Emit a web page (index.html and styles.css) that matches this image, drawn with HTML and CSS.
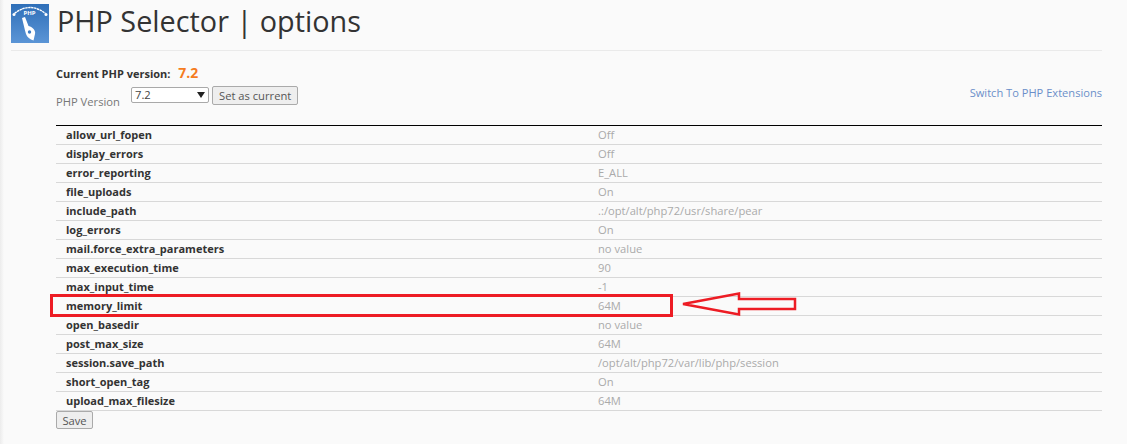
FILE: index.html
```html
<!DOCTYPE html>
<html lang="en">
<head>
<meta charset="utf-8">
<title>PHP Selector | options</title>
<link rel="stylesheet" href="styles.css">
</head>
<body>
<div class="page">
  <header class="head">
    <svg class="logo" width="38" height="39" viewBox="0 0 38 39">
      <defs><linearGradient id="g" x1="0" y1="0" x2="0" y2="1"><stop offset="0" stop-color="#2f6fb8"/><stop offset="1" stop-color="#5b95d6"/></linearGradient></defs>
      <rect width="38" height="39" fill="url(#g)"/>
      <path d="M3.500 9.500Q19 -2.500 34.500 9.500" fill="none" stroke="#fff" stroke-width="1.400" stroke-dasharray="2.500 .5"/>
      <circle cx="3" cy="10.500" r="1.500" fill="#fff"/><circle cx="35" cy="10.500" r="1.500" fill="#fff"/>
      <path d="M11 14L14 13L17.500 22C22 23 25 27 24 30L22.500 36.500C19 35.500 16 33 15 30Q14.500 28 14 26.500Z" fill="#fff"/>
      <circle cx="18.500" cy="28" r="1.700" fill="#3d7cc4"/>
      <text class="logo-text" x="18.500" y="10.500" text-anchor="middle">PHP</text>
    </svg>
    <h1 class="title">PHP Selector | options</h1>
  </header>
  <main class="content">
    <div class="toolbar">
      <div class="version">
        <p class="current"><b>Current PHP version:</b> <span class="num">7.2</span></p>
        <form class="picker">
          <label class="picker-label">PHP Version</label>
          <div class="select"><span>7.2</span><i class="caret"></i></div>
          <button type="button" class="btn">Set as current</button>
        </form>
      </div>
      <a class="switch" href="#">Switch To PHP Extensions</a>
    </div>
    <div class="table-wrap">
      <table class="opts">
        <tr><th>allow_url_fopen</th><td>Off</td></tr>
        <tr><th>display_errors</th><td>Off</td></tr>
        <tr><th>error_reporting</th><td>E_ALL</td></tr>
        <tr><th>file_uploads</th><td>On</td></tr>
        <tr><th>include_path</th><td>.:/opt/alt/php72/usr/share/pear</td></tr>
        <tr><th>log_errors</th><td>On</td></tr>
        <tr><th>mail.force_extra_parameters</th><td>no value</td></tr>
        <tr><th>max_execution_time</th><td>90</td></tr>
        <tr><th>max_input_time</th><td>-1</td></tr>
        <tr><th>memory_limit</th><td>64M</td></tr>
        <tr><th>open_basedir</th><td>no value</td></tr>
        <tr><th>post_max_size</th><td>64M</td></tr>
        <tr><th>session.save_path</th><td>/opt/alt/php72/var/lib/php/session</td></tr>
        <tr><th>short_open_tag</th><td>On</td></tr>
        <tr><th>upload_max_filesize</th><td>64M</td></tr>
      </table>
      <div class="redbox"></div>
      <svg class="arrow" width="120" height="26" viewBox="0 0 120 26">
        <path d="M3 12L59 1.500V7H115V17H59V22.500Z" fill="none" stroke="#ed1c24" stroke-width="2.500"/>
      </svg>
    </div>
    <button type="button" class="btn save">Save</button>
  </main>
</div>
</body>
</html>
```
FILE: styles.css
```css
* { box-sizing: border-box; }
html, body { margin: 0; height: 100%; }
body {
  background: linear-gradient(to right, #ececec 0, #fafafa 4px);
  font-family: "Open Sans", sans-serif;
  font-size: 11.2px;
  color: #777;
  overflow: hidden;
}
.page { padding: 4px 25px 0 11px; }
.head {
  display: flex;
  align-items: flex-start;
  gap: 8px;
  height: 47px;
  border-bottom: 1px solid #eaeaea;
}
.logo { flex: none; }
.logo-text { font: 700 6px "Open Sans", sans-serif; fill: #fff; }
.title {
  margin: -7px 0 0;
  font-size: 28.8px;
  line-height: 47px;
  font-weight: 400;
  color: #333;
}
.content { padding: 0 0 0 45px; }
.toolbar {
  display: flex;
  justify-content: space-between;
  height: 74px;
}
.current {
  margin: 12px 0 0;
  height: 20px;
  line-height: 20px;
  color: #333;
}
.current b { font-weight: 700; font-size: 11px; }
.num {
  margin-left: 5px;
  font-size: 14px;
  font-weight: 700;
  color: #f57c1f;
}
.picker { display: flex; align-items: flex-start; margin-top: 3px; }
.picker-label { width: 75px; margin-top: 8px; line-height: 15px; }
.select {
  width: 78px;
  height: 16px;
  margin-top: 1px;
  padding-left: 3px;
  display: flex;
  align-items: center;
  justify-content: space-between;
  background: #fff;
  border: 1px solid #a9a9a9;
  border-radius: 2px;
  color: #444;
  line-height: 14px;
}
.caret {
  width: 0;
  height: 0;
  margin-right: 3px;
  border-left: 4px solid transparent;
  border-right: 4px solid transparent;
  border-top: 6px solid #222;
}
.btn {
  height: 19px;
  padding: 0 6px;
  margin-left: 3px;
  background: #eee;
  border: 1px solid #aaa;
  border-radius: 2px;
  font: 400 11.2px/15px "Open Sans", sans-serif;
  color: #555;
}
.switch {
  margin-top: 34px;
  font-size: 11.1px;
  line-height: 15px;
  color: #6b8fc9;
  text-decoration: none;
}
.table-wrap { position: relative; }
.opts {
  width: 100%;
  border-collapse: collapse;
  table-layout: fixed;
  border-top: 1px solid #000;
}
.opts tr { height: 19px; border-bottom: 1px solid #d8d8d8; }
.opts th, .opts td {
  padding: 0 10px 2px;
  text-align: left;
  line-height: 15px;
}
.opts th { width: 532px; font-size: 11px; font-weight: 700; color: #333; }
.opts td { color: #aaa; }
.redbox {
  position: absolute;
  left: -6px;
  top: 169px;
  width: 623px;
  height: 23px;
  border: 3px solid #ed1c24;
}
.arrow {
  position: absolute;
  left: 624px;
  top: 167px;
}
.save { display: block; margin: 0; height: 18px; padding: 0 5px; width: 37px; }
```
